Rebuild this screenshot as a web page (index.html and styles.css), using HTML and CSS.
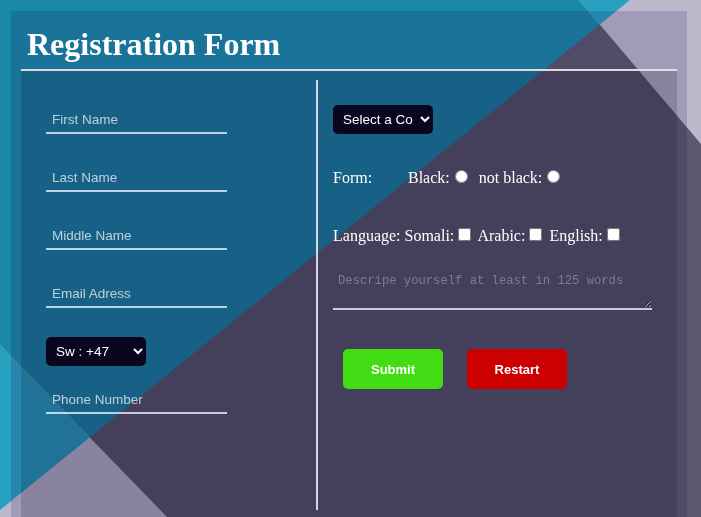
FILE: index.html
```html
<!DOCTYPE html>
<html lang="en">
<head>
<meta charset="utf-8">
<title>Registration Form</title>
<link rel="stylesheet" href="styles.css">
</head>
<body>
<svg class="backdrop" viewBox="0 0 701 517" preserveAspectRatio="none" aria-hidden="true">
  <defs>
    <clipPath id="tealClip"><polygon points="0,0 630,0 0,510"/></clipPath>
  </defs>
  <rect width="701" height="517" fill="#5b596d"/>
  <polygon points="0,0 630,0 0,510" fill="#1a88a8"/>
  <polygon points="579,0 701,0 701,144" fill="#bdb8cc"/>
  <polygon points="0,345 167,517 0,517" fill="#bdb8cc"/>
  <g clip-path="url(#tealClip)">
    <polygon points="579,0 701,0 701,144" fill="#28a0c0"/>
    <polygon points="0,345 167,517 0,517" fill="#28a0c0"/>
  </g>
</svg>
<div class="container">
  <h1 class="title">Registration Form</h1>
  <form class="form">
    <div class="col col-left">
      <input class="field" type="text" placeholder="First Name">
      <input class="field" type="text" placeholder="Last Name">
      <input class="field" type="text" placeholder="Middle Name">
      <input class="field" type="text" placeholder="Email Adress">
      <select class="dark-select select-code"><option>Sw : +47</option><option>So : +252</option></select>
      <input class="field field-phone" type="text" placeholder="Phone Number">
    </div>
    <div class="col col-right">
      <select class="dark-select"><option>Select a Country</option><option>Somalia</option></select>
      <div class="row row-form"><span class="row-label">Form:</span>Black:<input type="radio" name="color"> &nbsp;not black:<input type="radio" name="color"></div>
      <div class="row row-lang">Language: Somali:<input type="checkbox"> Arabic:<input type="checkbox"> English:<input type="checkbox"></div>
      <textarea class="about" placeholder="Descripe yourself at least in 125 words"></textarea>
      <div class="buttons"><button type="submit" class="btn btn-submit">Submit</button> <button type="reset" class="btn btn-reset">Restart</button></div>
    </div>
  </form>
</div>
</body>
</html>
```
FILE: styles.css
```css
html, body {
  margin: 0;
  padding: 0;
  height: 100%;
  overflow: hidden;
}

body {
  font-family: "Liberation Serif", "Times New Roman", serif;
  font-size: 16px;
  color: #ffffff;
}

.backdrop {
  position: fixed;
  left: 0;
  top: 0;
  width: 100%;
  height: 100%;
  z-index: -1;
  display: block;
}

.container {
  margin: 11px 0 0 11px;
  width: 676px;
  height: calc(100vh - 11px);
  box-sizing: border-box;
  padding: 15px 10px 0;
  background: rgba(30, 10, 85, 0.17);
  display: flex;
  flex-direction: column;
}

.title {
  margin: 0 0 6px;
  padding-left: 6px;
  font-family: "Liberation Serif", "Times New Roman", serif;
  font-weight: 700;
  font-size: 32px;
  line-height: 37px;
  color: #ffffff;
}

.form {
  flex: 1;
  margin: 0;
  border-top: 2px solid #dcdce0;
  background: rgba(0, 0, 20, 0.15);
  display: flex;
  align-items: flex-start;
}

.col {
  margin-top: 9px;
  box-sizing: border-box;
}

.col-left {
  width: 297px;
  height: 430px;
  padding: 25px 0 0 25px;
  border-right: 2px solid #d6d6de;
}

.col-right {
  padding: 25px 0 0 15px;
  display: flex;
  flex-direction: column;
  align-items: flex-start;
}

.field {
  display: block;
  width: 181px;
  height: 29px;
  box-sizing: border-box;
  margin: 0 0 29px;
  padding: 1px 6px 0;
  background: transparent;
  border: none;
  border-bottom: 2px solid rgba(235, 242, 255, 0.78);
  font-family: "Liberation Sans", Arial, sans-serif;
  font-size: 13.5px;
  color: #ffffff;
  outline: none;
}

.field::placeholder {
  color: rgba(255, 255, 255, 0.7);
}

.field-phone {
  margin-bottom: 0;
}

.dark-select {
  display: block;
  width: 100px;
  height: 29px;
  box-sizing: border-box;
  padding: 0 4px 0 6px;
  background-color: #0a0620;
  color: #ffffff;
  border: none;
  border-radius: 5px;
  font-family: "Liberation Sans", Arial, sans-serif;
  font-size: 13.5px;
}

.select-code {
  margin: 0 0 19px;
}

.row {
  height: 20px;
  line-height: 20px;
  white-space: nowrap;
}

.row-form {
  margin-top: 33px;
}

.row-lang {
  margin-top: 38px;
}

.row-label {
  display: inline-block;
  width: 75px;
}

.about {
  margin-top: 27px;
  width: 319px;
  height: 38px;
  box-sizing: border-box;
  padding: 2px 5px;
  background: transparent;
  border: none;
  border-bottom: 2px solid rgba(235, 242, 255, 0.78);
  font-family: "Liberation Mono", "Courier New", monospace;
  font-size: 12.2px;
  color: #ffffff;
  outline: none;
}

.about::placeholder {
  color: #7e7c8e;
}

.buttons {
  margin-top: 39px;
}

.btn {
  width: 100px;
  height: 40px;
  margin: 0 10px;
  border: none;
  border-radius: 5px;
  font-family: "Liberation Sans", Arial, sans-serif;
  font-weight: 700;
  font-size: 13px;
  color: #ffffff;
}

.btn-submit {
  background: #42dc14;
}

.btn-reset {
  background: #cc0000;
}
```
